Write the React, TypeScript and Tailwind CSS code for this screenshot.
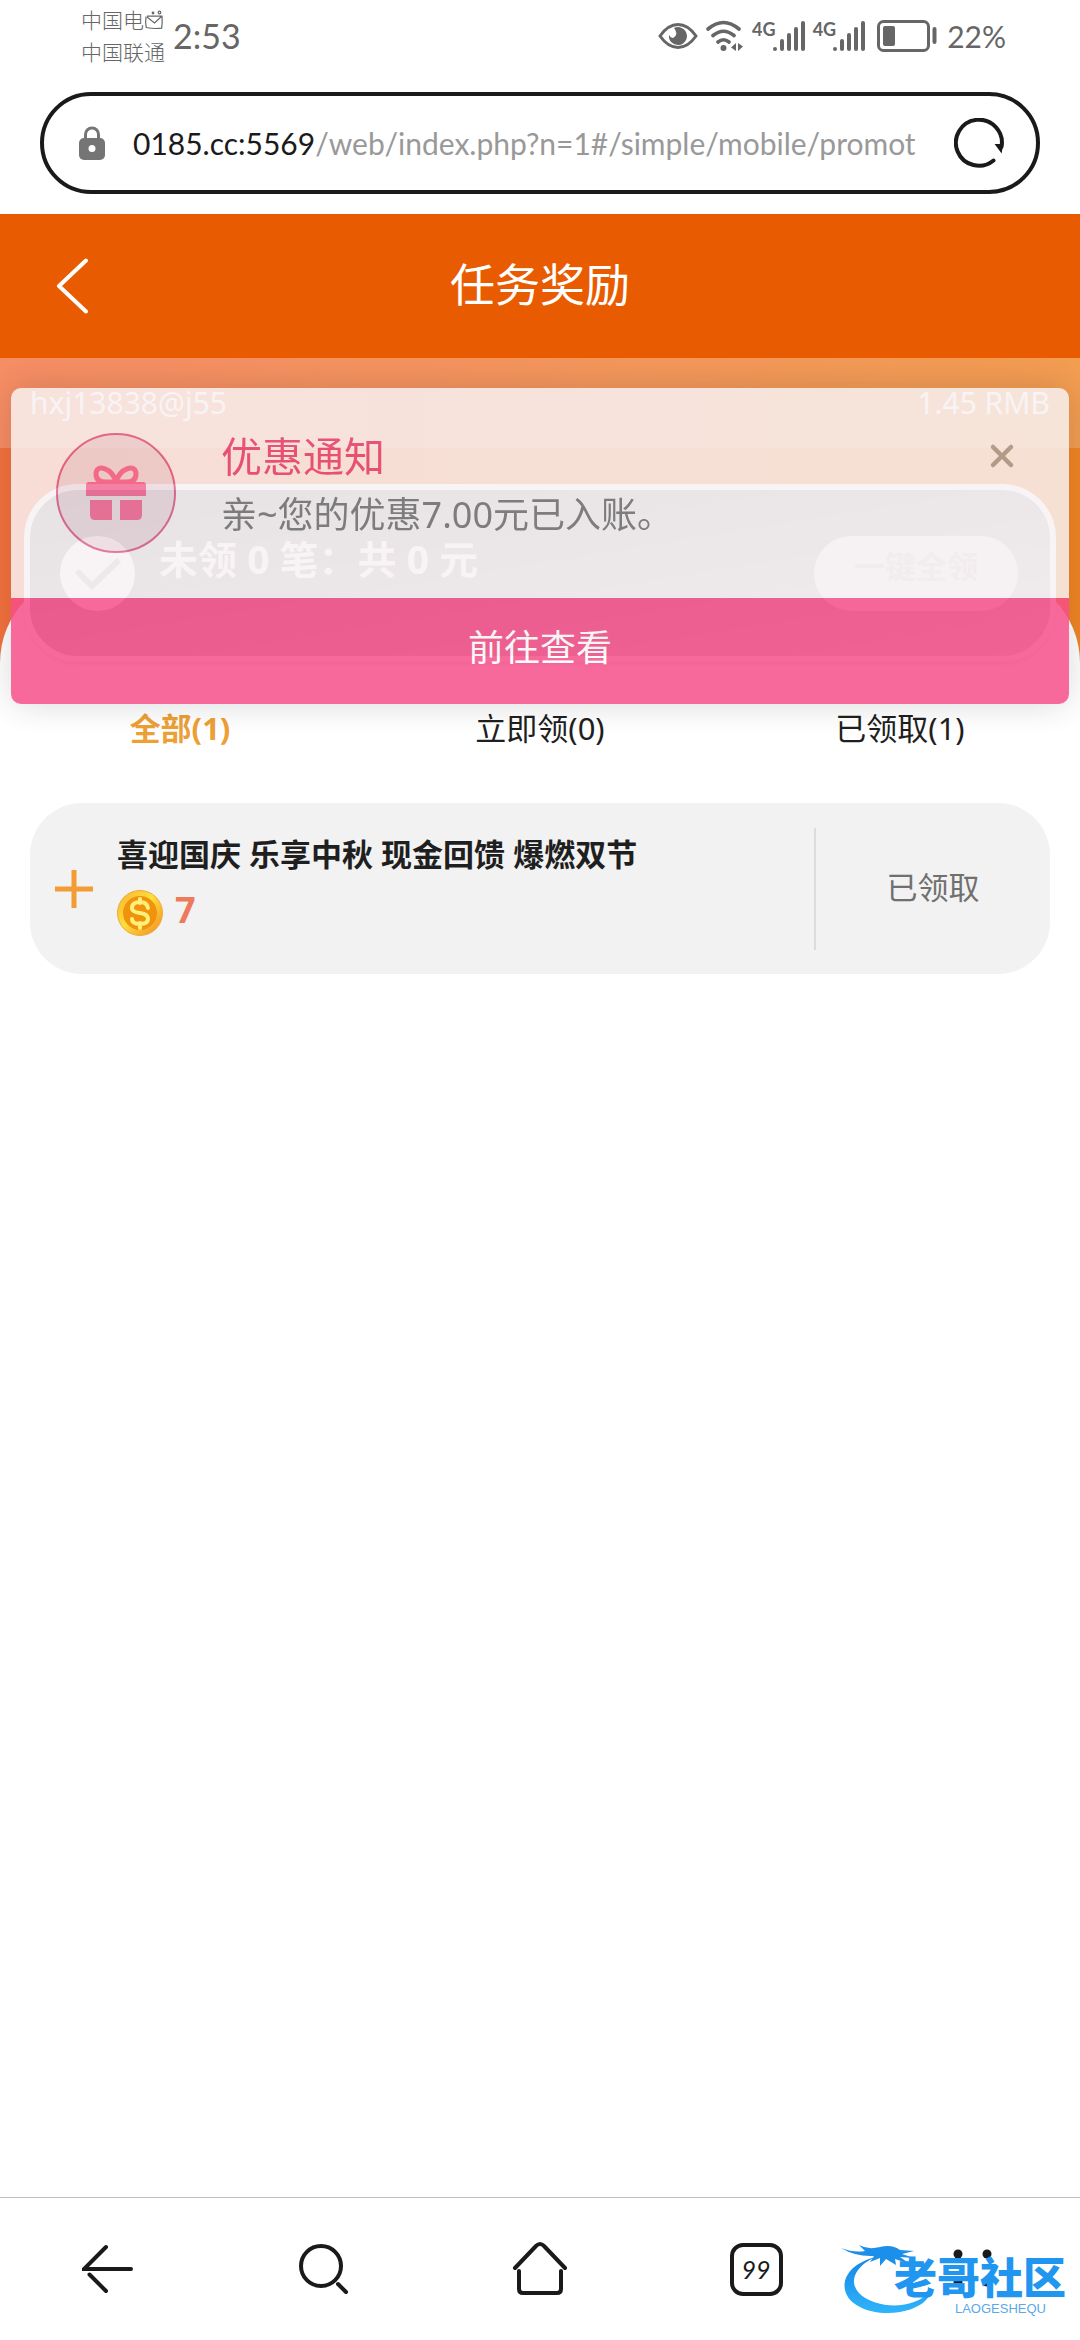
import { useState } from "react"
import { X } from "lucide-react"

const TABS = [
  { id: "all", label: "全部(1)" },
  { id: "claim", label: "立即领(0)" },
  { id: "claimed", label: "已领取(1)" },
]

const REWARDS = [
  { id: 1, title: "喜迎国庆 乐享中秋 现金回馈 爆燃双节", amount: 7, status: "已领取" },
]

function SignalIcon() {
  return (
    <div className="flex h-[32px] items-start">
      <span className="text-[18px] leading-[18px] font-bold">4G</span>
      <svg className="-ml-[4px] h-[32px] w-[34px]" viewBox="0 0 34 32" stroke="currentColor" strokeWidth="4" strokeLinecap="round" aria-hidden>
        <path d="M3 29v.1M10 21v8M17 15v14M24 9v20M31 3v26" />
      </svg>
    </div>
  )
}

function StatusBar() {
  return (
    <div className="flex h-[72px] items-center justify-between pr-[74px] pl-[81px] text-[#666]">
      <div className="flex items-center gap-2">
        <div className="text-[21px] leading-[32px] font-light">
          <div className="flex h-[32px] items-center">
            中国电
            <svg className="h-[20px] w-[20px]" viewBox="0 0 20 20" fill="none" stroke="currentColor" strokeWidth="1.2" aria-hidden>
              <path d="M2 6.500q-.8 5 .2 11 8 1.600 15.500.6.800-6 .3-12H3M3 7l7.500 6 7.500-7" />
              <circle cx="15.500" cy="2.500" r="1.300" />
              <circle cx="9" cy="3" r=".8" />
            </svg>
          </div>
          <div className="h-[32px]">中国联通</div>
        </div>
        <time className="text-[34px] leading-[40px]">2:53</time>
      </div>
      <div className="flex items-center gap-[7px]">
        <svg className="h-[28px] w-[40px]" viewBox="0 0 40 28" fill="none" stroke="currentColor" strokeWidth="3" aria-hidden>
          <path d="M2 14Q10 2.500 20 2.500T38 14Q30 25.500 20 25.500T2 14Z" />
          <path d="M16 6q4 5 1 8.500T11 13a9 9 0 1 0 5-7Z" fill="currentColor" stroke="none" />
        </svg>
        <svg className="h-[32px] w-[40px]" viewBox="0 0 40 32" fill="none" stroke="currentColor" strokeWidth="3.600" strokeLinecap="round" aria-hidden>
          <path d="M3 9q15.500-13 31 0M8 15.500q10.500-8.500 21 0M13 22q5.500-4.500 11 0" />
          <circle cx="18.500" cy="28" r="3" fill="currentColor" stroke="none" />
          <path d="M31 23v8l-5-3.500zM33 31v-8l5 3.500z" fill="currentColor" stroke="none" />
        </svg>
        <SignalIcon />
        <SignalIcon />
        <svg className="ml-[4px] h-[32px] w-[60px]" viewBox="0 0 60 32" fill="none" stroke="currentColor" aria-hidden>
          <rect x="1.500" y="1.500" width="50" height="29" rx="5" strokeWidth="3" />
          <rect x="6" y="6" width="12" height="20" rx="2" fill="currentColor" stroke="none" />
          <path d="M57.500 9v13" strokeWidth="4" strokeLinecap="round" />
        </svg>
        <span className="ml-[3px] text-[30px] leading-[40px]">22%</span>
      </div>
    </div>
  )
}

function AddressBar() {
  return (
    <div className="mx-10 mt-5 mb-5 flex h-[102px] items-center rounded-full border-4 border-[#1a1a1a] pr-[32px] pl-[35px]">
      <svg className="h-[34px] w-[26px] shrink-0" viewBox="0 0 26 34" aria-hidden>
        <path d="M6.500 14V8.500a6.500 6.500 0 0 1 13 0V14" fill="none" stroke="#757575" strokeWidth="3" />
        <rect y="12" width="26" height="22" rx="5" fill="#757575" />
        <circle cx="13" cy="22.500" r="3.500" fill="white" />
      </svg>
      <button
        type="button"
        className="ml-[28px] min-w-0 flex-1 overflow-hidden text-left text-[30px] leading-[40px] whitespace-nowrap text-[#999]"
      >
        <span className="text-[#1a1a1a]">0185.cc:5569</span>
        /web/index.php?n=1#/simple/mobile/promot
      </button>
      <button type="button" aria-label="刷新" className="ml-[24px] shrink-0">
        <svg className="size-[50px]" viewBox="0 0 50 50" fill="none" stroke="#1a1a1a" strokeWidth="4" strokeLinecap="round" aria-hidden>
          <path d="M39.500 42.500A23 23 0 1 1 47.500 29" />
          <path d="M42.500 27l4.500 6 1-6z" fill="#1a1a1a" strokeWidth="2" />
        </svg>
      </button>
    </div>
  )
}

function PageHeader() {
  return (
    <header className="grid h-[144px] grid-cols-3 items-center bg-[#e95b00] text-white">
      <button type="button" aria-label="返回" className="ml-[56px] justify-self-start">
        <svg className="h-[56px] w-[34px]" viewBox="0 0 34 56" fill="none" stroke="currentColor" strokeWidth="4" strokeLinecap="round" strokeLinejoin="round" aria-hidden>
          <path d="M30 2.500L3 28l27 25.500" />
        </svg>
      </button>
      <h1 className="pb-[3px] text-center text-[45px] leading-[56px]">任务奖励</h1>
    </header>
  )
}

function Summary() {
  return (
    <section className="mx-6 flex h-[178px] items-center rounded-[54px] border-[6px] border-white bg-linear-to-br from-[#8f8f8f] to-[#cfcfcf] pr-[32px] pl-[30px] shadow-md">
      <svg className="size-[75px] shrink-0" viewBox="0 0 75 75" aria-hidden>
        <circle cx="37.500" cy="37.500" r="37.500" fill="white" />
        <path d="M17 35l15 15 27-26" fill="none" stroke="#b5b5b5" strokeWidth="6" />
      </svg>
      <p className="mb-7 ml-[24px] flex-1 text-[39px] leading-[48px] font-bold text-white">未领 0 笔：共 0 元</p>
      <button type="button" className="h-[75px] w-[204px] rounded-full bg-[#efefef] pb-[14px] text-[31px] font-bold text-[#d0d0d0]">
        一键全领
      </button>
    </section>
  )
}

function Notice({ onClose }: { onClose: () => void }) {
  return (
    <div
      role="dialog"
      aria-labelledby="notice-title"
      className="absolute inset-x-[11px] top-[30px] overflow-hidden rounded-[10px] bg-[#f7f1f3] opacity-85 shadow-[0_0_36px_rgba(0,0,0,0.18)]"
    >
      <div className="flex h-[210px] items-start pt-[45px] pr-[49px] pl-[45px]">
        <div className="flex size-[120px] shrink-0 items-center justify-center rounded-full border-2 border-[#de6087] bg-[#963c5a]/12">
          <svg className="h-[56px] w-[60px]" viewBox="0 0 60 56" fill="#f26a96" aria-hidden>
            <path d="M30 17C26 3 10-2 10 9q0 8 10 8zM30 17C34 3 50-2 50 9q0 8-10 8z" fill="none" stroke="#f26a96" strokeWidth="5" />
            <path d="M3 17h54q3 0 3 3v11H0V20q0-3 3-3zM4 35h22v20H9q-5 0-5-5zM34 35h22v15q0 5-5 5H34z" />
          </svg>
        </div>
        <div className="ml-[45px] flex-1">
          <h2 id="notice-title" className="text-[41px] leading-[46px] text-[#e64a7e]">优惠通知</h2>
          <p className="mt-[12px] text-[36px] leading-[48px] text-[#777]">亲~您的优惠7.00元已入账。</p>
        </div>
        <button type="button" aria-label="关闭" onClick={onClose} className="mt-[5px] text-[#a89f99]">
          <X className="size-[36px]" strokeWidth={3} aria-hidden />
        </button>
      </div>
      <button type="button" className="h-[106px] w-full bg-[#f54f88] pb-[6px] text-[36px] text-white">
        前往查看
      </button>
    </div>
  )
}

function RewardCard({ title, amount, status }: { title: string; amount: number; status: string }) {
  return (
    <li className="flex h-[171px] items-center rounded-[52px] bg-[#f2f2f2]">
      <button type="button" aria-label="展开" className="ml-[25px]">
        <svg className="size-[38px]" viewBox="0 0 38 38" stroke="#f39c34" strokeWidth="5" aria-hidden>
          <path d="M19 0v38M0 19h38" />
        </svg>
      </button>
      <div className="mb-[8px] ml-[24px] flex-1">
        <h3 className="text-[31px] leading-[40px] font-bold text-[#1f1f1f]">{title}</h3>
        <div className="mt-4 flex items-center gap-3">
          <svg className="size-[46px]" viewBox="0 0 46 46" aria-hidden>
            <defs>
              <linearGradient id="coin-rim" x1="0" y1="0" x2="1" y2="1">
                <stop offset="0" stopColor="#f7b030" />
                <stop offset="0.450" stopColor="#ffdf3a" />
                <stop offset="1" stopColor="#f08a24" />
              </linearGradient>
            </defs>
            <circle cx="23" cy="23" r="22.500" fill="url(#coin-rim)" stroke="#f0a93a" />
            <circle cx="23" cy="23" r="17" fill="#f0930c" />
            <path d="M31 18q-1-6-8-6t-8 5 8 6q8 1 8 6t-8 5-8-5M23 9v4M23 33v5" fill="none" stroke="#fff07a" strokeWidth="4" strokeLinecap="round" />
          </svg>
          <span className="mb-[6px] text-[36px] leading-[40px] font-bold text-[#ee7a5c]">{amount}</span>
        </div>
      </div>
      <div className="flex h-[122px] w-[236px] items-center justify-center border-l-2 border-[#dcdcdc] pb-[3px] text-[31px] text-[#707070]">
        {status}
      </div>
    </li>
  )
}

function Watermark() {
  return (
    <div className="pointer-events-none absolute top-[44px] right-[14px] h-[78px] w-[226px]">
      <svg className="absolute inset-0 size-full" viewBox="0 0 226 78" aria-hidden>
        <defs>
          <linearGradient id="dragon" x1="0" y1="0" x2="0" y2="1">
            <stop offset="0" stopColor="#1487e8" />
            <stop offset="1" stopColor="#2fb4fa" />
          </linearGradient>
        </defs>
        <path d="M36 15C14 20 2 34 5 48C9 66 36 74 60 70C78 67 90 58 91 48C82 60 64 65 46 63C26 60 13 50 14 38C15 28 24 20 36 15Z" fill="url(#dragon)" />
        <path d="M1 6Q14 11 25 9L19 3Q28 8 40 5Q52 2 60 8L74 9L62 12L74 16L60 15L70 22L55 17L56 23L46 17L40 24L40 16L30 20L34 14Q16 15 1 6Z" fill="#1c8fea" />
      </svg>
      <div className="relative pt-[14px] text-right text-[43px] leading-[44px] font-black whitespace-nowrap text-[#2196f0]">
        老哥社区
      </div>
      <div className="relative mt-[3px] pr-[20px] text-right font-['Liberation_Sans',sans-serif] text-[13px] leading-[12px] text-[#5aa9e8]">
        LAOGESHEQU
      </div>
    </div>
  )
}

function BrowserNav() {
  return (
    <nav className="relative grid h-[143px] grid-cols-5 items-center justify-items-center border-t border-[#c0c0c0] text-[#1a1a1a]">
      <button type="button" aria-label="后退">
        <svg className="size-[52px]" viewBox="0 0 52 52" fill="none" stroke="currentColor" strokeWidth="4" strokeLinecap="round" aria-hidden>
          <path d="M24 4L2 26h47M7.500 31.500L24 48" />
        </svg>
      </button>
      <button type="button" aria-label="搜索">
        <svg className="size-[52px]" viewBox="0 0 52 52" fill="none" stroke="currentColor" strokeWidth="4" strokeLinecap="round" aria-hidden>
          <circle cx="23" cy="23" r="20" />
          <path d="M40 41l8 8" />
        </svg>
      </button>
      <button type="button" aria-label="主页">
        <svg className="h-[54px] w-[56px]" viewBox="0 0 56 54" fill="none" stroke="currentColor" strokeWidth="4" strokeLinecap="round" aria-hidden>
          <path d="M3 26L24 4q4-4 8 0l21 22M7 29v18q0 4 4 4h34q4 0 4-4V29" />
        </svg>
      </button>
      <button
        type="button"
        aria-label="标签页"
        className="size-[53px] rounded-[13px] border-4 border-current font-['Lato',sans-serif] text-[25px] leading-[44px] italic"
      >
        99
      </button>
      <button type="button" aria-label="菜单">
        <svg className="size-[52px]" viewBox="0 0 52 52" fill="currentColor" aria-hidden>
          <circle cx="12" cy="11" r="4.500" />
          <circle cx="41" cy="11" r="4.500" />
          <circle cx="12" cy="39" r="4.500" />
          <circle cx="41" cy="39" r="4.500" />
        </svg>
      </button>
      <Watermark />
    </nav>
  )
}

export default function App() {
  const [tab, setTab] = useState("all")
  const [noticeOpen, setNoticeOpen] = useState(true)

  return (
    <div className="flex min-h-screen flex-col bg-white font-['Noto_Sans','Noto_Sans_CJK_SC',sans-serif]">
      <div className="font-['Lato','Noto_Sans_CJK_SC',sans-serif]">
        <StatusBar />
        <AddressBar />
      </div>
      <PageHeader />

      <main className="relative flex-1">
        <div className="bg-linear-to-r from-[#f4713f] to-[#f08526]">
          <div className="flex h-[90px] items-center justify-between bg-white/20 px-[30px] text-[30px] leading-[40px] text-white">
            <span>hxj13838@j55</span>
            <span>1.45 RMB</span>
          </div>
          <div className="pt-[125px]">
            <div className="h-[90px] rounded-t-[90px] bg-white" />
          </div>
        </div>
        <div className="relative -mt-[179px]">
          <Summary />
        </div>

        <div role="tablist" className="mt-[38px] grid grid-cols-3">
          {TABS.map(({ id, label }) => (
            <button
              key={id}
              type="button"
              role="tab"
              aria-selected={tab === id}
              onClick={() => setTab(id)}
              className={
                tab === id
                  ? "h-[56px] text-[31px] font-bold text-[#eda035]"
                  : "h-[56px] text-[31px] text-[#1f1f1f]"
              }
            >
              {label}
            </button>
          ))}
        </div>

        <ul className="mx-[30px] mt-[47px]">
          {REWARDS.map((reward) => (
            <RewardCard key={reward.id} {...reward} />
          ))}
        </ul>

        {noticeOpen && <Notice onClose={() => setNoticeOpen(false)} />}
      </main>

      <BrowserNav />
    </div>
  )
}
